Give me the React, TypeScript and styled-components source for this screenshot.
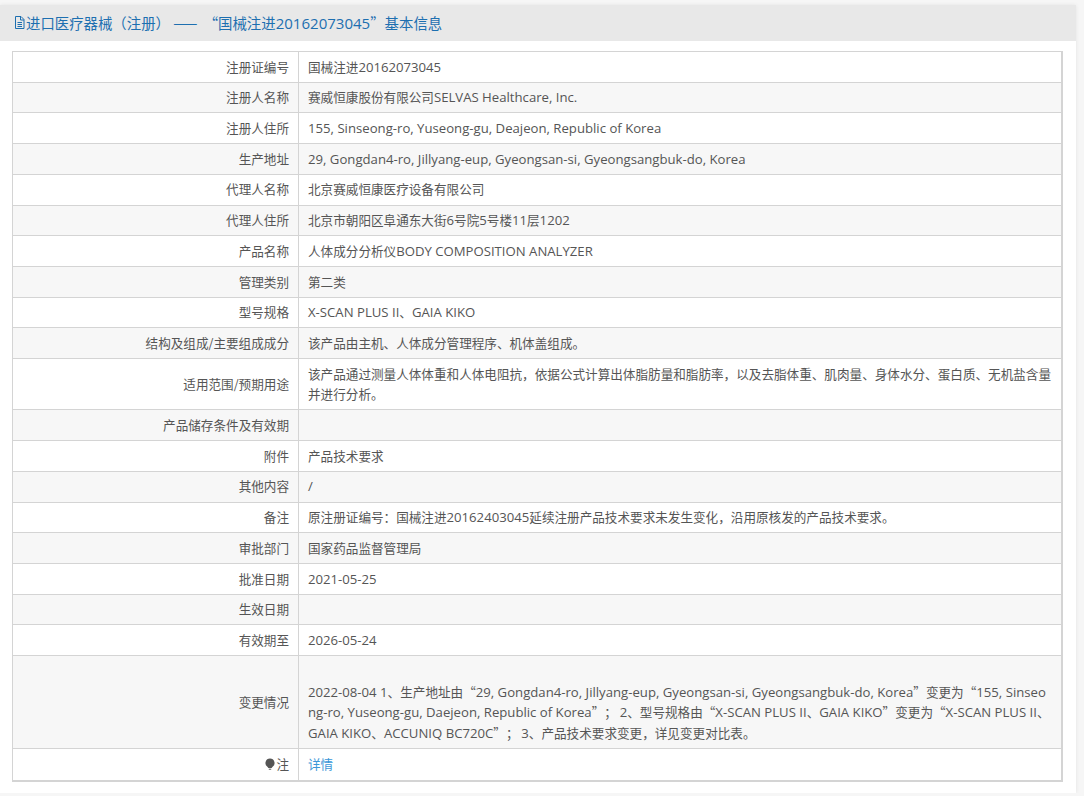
import React from 'react';
import styled, { createGlobalStyle } from 'styled-components';

const GlobalStyle = createGlobalStyle`
  html, body {
    margin: 0;
    padding: 0;
    background: #f6f6f6;
  }
  body {
    font-family: "Noto Sans CJK SC", "Open Sans", sans-serif;
    font-size: 12.6px;
    color: #555;
    text-spacing-trim: space-all;
  }
`;

const Panel = styled.div`
  box-sizing: border-box;
  width: 1076px;
  height: 788px;
  margin-top: 5px;
  background: #fff;
  box-shadow: 0 0 4px rgba(0, 0, 0, 0.08);
`;

const Header = styled.div`
  display: flex;
  align-items: center;
  box-sizing: border-box;
  height: 36px;
  padding: 0 0 1px 13px;
  background: #e8e8e8;
  color: #1d6fb0;
  font-size: 14.4px;
  white-space: pre;
`;

const TableWrap = styled.div`
  padding: 10px 13px 0 12px;
`;

const Table = styled.table`
  width: 1051px;
  border-collapse: collapse;
  table-layout: fixed;
  border-style: solid;
  border-color: #d4d4d4;
  border-width: 1px 2px 2px 1px;
`;

const LabelCol = styled.col`
  width: 286px;
`;

const Row = styled.tr<{ $alt: boolean }>`
  background: ${(p) => (p.$alt ? '#f7f7f7' : '#fff')};
`;

const Label = styled.td`
  padding: 4.61px 9px 4.61px 0;
  border: 1px solid #d4d4d4;
  text-align: right;
  line-height: 20.5px;
`;

const Value = styled.td<{ $top?: number; $bottom?: number }>`
  padding: ${(p) => p.$top ?? 4.61}px 9px ${(p) => p.$bottom ?? 4.61}px;
  border: 1px solid #d4d4d4;
  line-height: 20.5px;
  word-break: break-all;
`;

const Latin = styled.span`
  font-family: "Open Sans", sans-serif;
  font-size: 1.045em;
`;

const DetailLink = styled.a`
  color: #3c97d8;
  text-decoration: none;
`;

const HeaderIcon = styled.svg`
  flex: none;
`;

const Bulb = styled.svg`
  vertical-align: -1px;
  margin-right: 1px;
`;

function FileIcon() {
  return (
    <HeaderIcon width="13" height="13" viewBox="0 0 13 13" fill="none" stroke="#1d6fb0" strokeWidth="1">
      <path d="M2.500 .5h5.500L11 3.500v9H2.500z" />
      <path d="M7.500 .5v3.500H11M4.500 6.500h4.500M4.500 8.500h4.500M4.500 10.500h4.500" />
    </HeaderIcon>
  );
}

function BulbIcon() {
  return (
    <Bulb width="10" height="12" viewBox="0 0 10 12" fill="#555">
      <path d="M5 .5a4.500 4.500 0 0 1 2.600 8.200L6.600 10H3.400L2.400 8.700A4.500 4.500 0 0 1 5 .5z" />
      <path d="M3.800 10.700h2.400v1H3.800z" />
    </Bulb>
  );
}

// ascii runs go in the latin font, the rest (and the curly quotes) stays cjk
function Mixed({ text }: { text: string }) {
  const parts = text.split(/([\x21-\x7e]+(?: [\x21-\x7e]+)*)/);
  return (
    <>
      {parts.map((part, i) => (i % 2 === 1 ? <Latin key={i}>{part}</Latin> : part))}
    </>
  );
}

const rows: [string, string][] = [
  ['注册证编号', '国械注进20162073045'],
  ['注册人名称', '赛威恒康股份有限公司SELVAS Healthcare, Inc.'],
  ['注册人住所', '155, Sinseong-ro, Yuseong-gu, Deajeon, Republic of Korea'],
  ['生产地址', '29, Gongdan4-ro, Jillyang-eup, Gyeongsan-si, Gyeongsangbuk-do, Korea'],
  ['代理人名称', '北京赛威恒康医疗设备有限公司'],
  ['代理人住所', '北京市朝阳区阜通东大街6号院5号楼11层1202'],
  ['产品名称', '人体成分分析仪BODY COMPOSITION ANALYZER'],
  ['管理类别', '第二类'],
  ['型号规格', 'X-SCAN PLUS II、GAIA KIKO'],
  ['结构及组成/主要组成成分', '该产品由主机、人体成分管理程序、机体盖组成。'],
  ['适用范围/预期用途', '该产品通过测量人体体重和人体电阻抗，依据公式计算出体脂肪量和脂肪率，以及去脂体重、肌肉量、身体水分、蛋白质、无机盐含量并进行分析。'],
  ['产品储存条件及有效期', ''],
  ['附件', '产品技术要求'],
  ['其他内容', '/'],
  ['备注', '原注册证编号：国械注进20162403045延续注册产品技术要求未发生变化，沿用原核发的产品技术要求。'],
  ['审批部门', '国家药品监督管理局'],
  ['批准日期', '2021-05-25'],
  ['生效日期', ''],
  ['有效期至', '2026-05-24'],
];

const changeText =
  '2022-08-04 1、生产地址由“29, Gongdan4-ro, Jillyang-eup, Gyeongsan-si, Gyeongsangbuk-do, Korea”变更为“155, Sinseong-ro, Yuseong-gu, Daejeon, Republic of Korea”； 2、型号规格由“X-SCAN PLUS II、GAIA KIKO”变更为“X-SCAN PLUS II、GAIA KIKO、ACCUNIQ BC720C”； 3、产品技术要求变更，详见变更对比表。';

export default function App() {
  return (
    <>
      <GlobalStyle />
      <Panel>
        <Header>
          <FileIcon />
          <Mixed text="进口医疗器械（注册） ——  “国械注进20162073045”基本信息" />
        </Header>
        <TableWrap>
          <Table>
            <colgroup>
              <LabelCol />
              <col />
            </colgroup>
            <tbody>
              {rows.map(([label, value], i) => (
                <Row key={label} $alt={i % 2 === 1}>
                  <Label>{label}</Label>
                  <Value>
                    <Mixed text={value} />
                  </Value>
                </Row>
              ))}
              <Row $alt>
                <Label>变更情况</Label>
                <Value $top={25.5}>
                  <Mixed text={changeText} />
                </Value>
              </Row>
              <Row $alt={false}>
                <Label>
                  <BulbIcon />注
                </Label>
                <Value $top={5.5} $bottom={5.5}>
                  <DetailLink href="#">详情</DetailLink>
                </Value>
              </Row>
            </tbody>
          </Table>
        </TableWrap>
      </Panel>
    </>
  );
}
